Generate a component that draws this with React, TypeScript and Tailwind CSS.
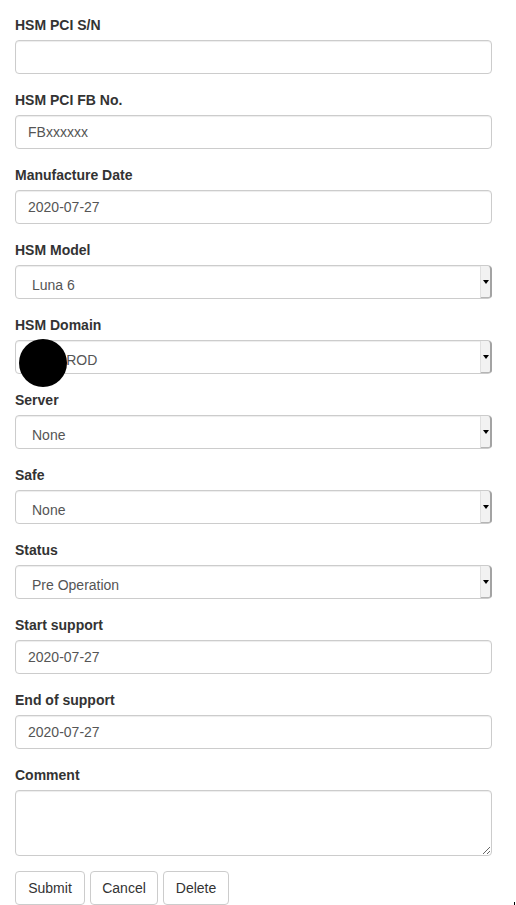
import React from 'react';

const inputCls =
  'block w-full h-[34px] px-[12px] border border-[#ccc] rounded-[4px] bg-white text-[14px] text-[#555] shadow-[inset_0_1px_1px_rgba(0,0,0,0.075)] outline-none';

function Label({ children }: { children: React.ReactNode }) {
  return <label className="block h-[21px] mb-[5px] font-bold text-[14px] leading-[20px] text-[#333] pt-[1px]">{children}</label>;
}

function TextField({ label, value }: { label: string; value?: string }) {
  return (
    <div className="mb-[15px]">
      <Label>{label}</Label>
      <input className={inputCls} defaultValue={value ?? ''} readOnly />
    </div>
  );
}

function SelectField({ label, value }: { label: string; value: string }) {
  return (
    <div className="mb-[15px]">
      <Label>{label}</Label>
      <div className="flex h-[34px] w-full border border-[#ccc] rounded-[4px] bg-white shadow-[inset_0_1px_1px_rgba(0,0,0,0.075)]">
        <div className="flex-1 pl-[16px] pt-[9px] text-[14px] leading-[20px] text-[#555] whitespace-nowrap">{value}</div>
        <div className="w-[12px] h-full bg-[#f2f2f2] border-l border-[#e0e0e0] border-r-2 border-r-[#a3a3a3] border-b border-b-[#b5b5b5] rounded-tr-[4px] rounded-br-[3px] -mr-px flex items-center justify-center">
          <div className="w-0 h-0 border-l-[3px] border-r-[3px] border-t-[4px] border-l-transparent border-r-transparent border-t-black mt-[1px]" />
        </div>
      </div>
    </div>
  );
}

export default function App() {
  return (
    <div className="relative w-[516px] h-[905px] bg-white pl-[15px] pt-[14px] font-['Liberation_Sans',Arial,sans-serif] overflow-hidden">
      <div className="w-[477px]">
        <TextField label="HSM PCI S/N" />
        <TextField label="HSM PCI FB No." value="FBxxxxxx" />
        <TextField label="Manufacture Date" value="2020-07-27" />
        <SelectField label="HSM Model" value="Luna 6" />
        <SelectField label="HSM Domain" value="QA-PROD" />
        <SelectField label="Server" value="None" />
        <SelectField label="Safe" value="None" />
        <SelectField label="Status" value="Pre Operation" />
        <TextField label="Start support" value="2020-07-27" />
        <TextField label="End of support" value="2020-07-27" />
        <div className="mb-[15px]">
          <Label>Comment</Label>
          <textarea className="block w-full h-[66px] px-[12px] py-[6px] border border-[#ccc] rounded-[4px] bg-white text-[14px] text-[#555] shadow-[inset_0_1px_1px_rgba(0,0,0,0.075)] outline-none" />
        </div>
        <div className="flex gap-[5px]">
          <button className="w-[70px] h-[34px] border border-[#ccc] rounded-[4px] bg-white text-[14px] text-[#333]">Submit</button>
          <button className="w-[68px] h-[34px] border border-[#ccc] rounded-[4px] bg-white text-[14px] text-[#333]">Cancel</button>
          <button className="w-[66px] h-[34px] border border-[#ccc] rounded-[4px] bg-white text-[14px] text-[#333]">Delete</button>
        </div>
      </div>
      <div className="absolute left-[19px] top-[339px] w-[48px] h-[48px] rounded-full bg-black" />
      <div className="absolute left-[514px] top-[902px] w-[1px] h-[3px] bg-black" />
    </div>
  );
}
